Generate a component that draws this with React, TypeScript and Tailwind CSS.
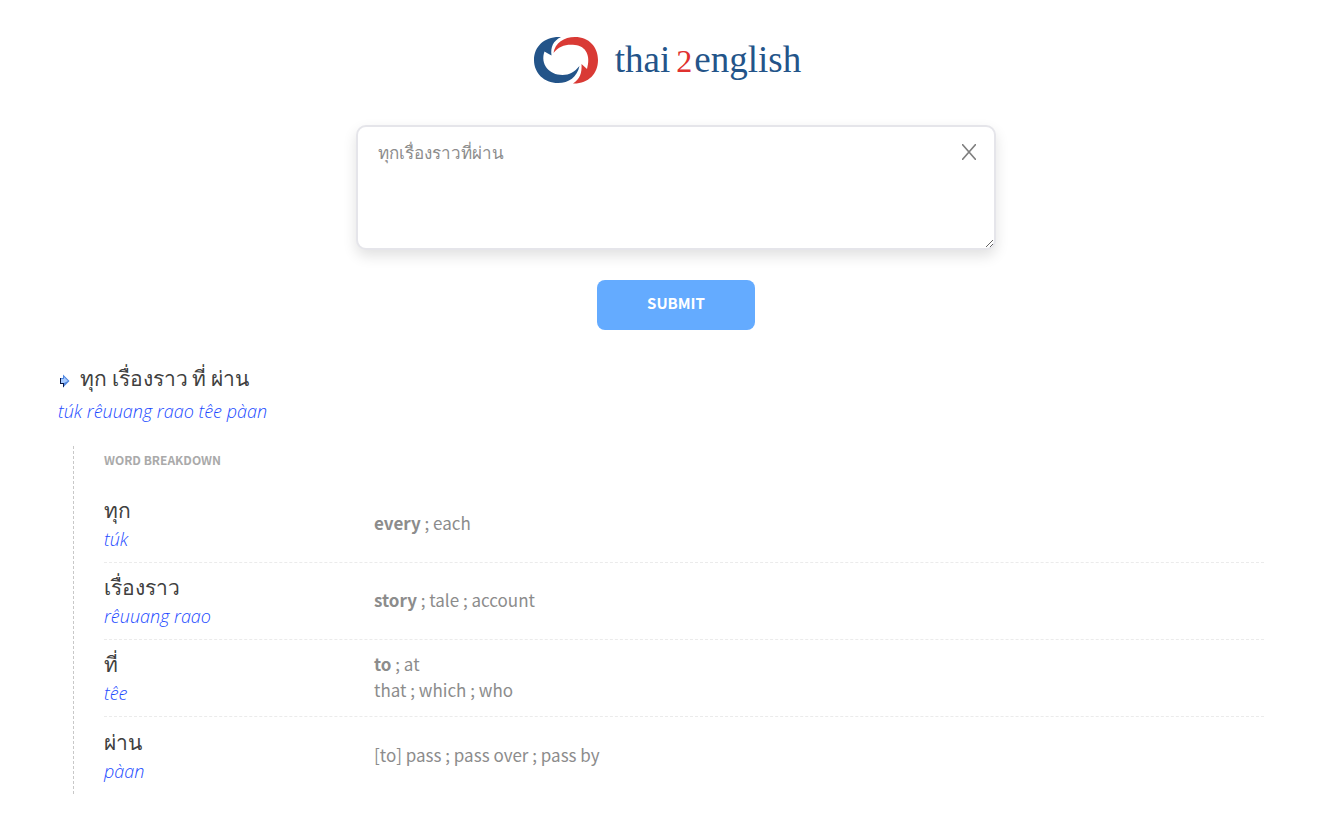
import { useState } from "react";

type Entry = {
  thai: string;
  roman: string;
  meanings: { main?: string; rest: string }[];
};

const entries: Entry[] = [
  { thai: "ทุก", roman: "túk", meanings: [{ main: "every", rest: " ; each" }] },
  { thai: "เรื่องราว", roman: "rêuuang raao", meanings: [{ main: "story", rest: " ; tale ; account" }] },
  { thai: "ที่", roman: "têe", meanings: [{ main: "to", rest: " ; at" }, { rest: "that ; which ; who" }] },
  { thai: "ผ่าน", roman: "pàan", meanings: [{ rest: "[to] pass ; pass over ; pass by" }] },
];

function Logo() {
  return (
    <a href="#" className="flex items-center gap-4">
      <svg width="66" height="48" viewBox="0 0 66 48" aria-hidden="true">
        <path
          fill="#235489"
          d="M28 1C12 0 1 10 1 24c0 13 10 23 24 23 11 0 19-6 21.5-17-5 6-10 9-17 9C16 39 7 28 11.5 15.5L14 17l4.5 2.5C17.5 11 20 5 28 1Z"
        />
        <path
          fill="#d93a35"
          d="M20.5 17C22 7 31 1 42 1c14 0 23 10 23 23 0 14-10 24-25 23.5C47 43 49 37 48.5 28l5.5 5C58 20 53 10 42 9c-9-1-16 1-21.5 8Z"
        />
      </svg>
      <span className="flex items-baseline font-['Liberation_Serif',serif] text-[37px] leading-[44px] text-[#235489]">
        <span>thai</span>
        <span className="mr-0.5 ml-1.5 text-[32px] text-[#e0312f]">2</span>
        <span>english</span>
      </span>
    </a>
  );
}

function Arrow() {
  return (
    <svg className="mt-2" width="12" height="14" viewBox="0 0 12 14" aria-hidden="true">
      <path d="M2 4h3V0.5L11.500 7 5 13.500V10H2z" fill="#4f86e0" />
      <path d="M3 5h3V3l4 4-4 2H3z" fill="#a9ccff" />
      <path d="M2 4v6h3v3.500l1-1V9H3V4z" fill="#0c1a4a" />
    </svg>
  );
}

export default function App() {
  const [text, setText] = useState("ทุกเรื่องราวที่ผ่าน");

  return (
    <div className="bg-white pb-7 font-['Noto_Sans_CJK_SC','Noto_Sans',sans-serif] text-[#8c8c8c]">
      <header className="flex justify-center pt-9 pl-1">
        <Logo />
      </header>

      <form className="flex flex-col items-center pt-[41px] pl-[22px]" onSubmit={(e) => e.preventDefault()}>
        <div className="relative w-full max-w-[640px]">
          <textarea
            aria-label="Thai text"
            value={text}
            onChange={(e) => setText(e.target.value)}
            className="block h-[125px] w-full resize rounded-[10px] border-2 border-[#e5e5ea] bg-white py-[11px] pr-12 pl-5 text-[17px] leading-[28px] shadow-[0_6px_14px_rgba(0,0,0,0.12)] outline-none"
          />
          <button type="button" aria-label="Clear" onClick={() => setText("")} className="absolute top-[19px] right-5">
            <svg width="14" height="16" viewBox="0 0 14 16" aria-hidden="true">
              <path d="M0 0l14 16M14 0l-14 16" stroke="#808080" strokeWidth="1.6" />
            </svg>
          </button>
        </div>
        <button
          type="submit"
          className="mt-[30px] h-[50px] w-[158px] rounded-lg bg-[#64abff] pb-1 text-[15px] leading-5 font-bold text-white"
        >
          SUBMIT
        </button>
      </form>

      <main className="pt-[31px] pr-[66px] pl-[58px]">
        <h1 className="flex items-center gap-[10px] text-[21px] leading-8 text-[#404040]">
          <Arrow />
          ทุก เรื่องราว ที่ ผ่าน
        </h1>
        <p className="font-['Open_Sans',sans-serif] text-[18px] leading-9 font-light text-[#1c4aff] italic">
          túk rêuuang raao têe pàan
        </p>

        <section className="mt-[17px] ml-[15px] border-l border-dashed border-[#c8c8c8] pl-[30px]">
          <h2 className="pb-3 text-[12px] leading-7 font-bold text-[#aaa]">WORD BREAKDOWN</h2>
          <dl>
            {entries.map((entry) => (
              <div
                key={entry.thai}
                className="flex h-[77px] items-center border-b border-dashed border-[#ebebeb] pb-0.5 last:border-b-0"
              >
                <dt className="w-[270px]">
                  <span className="block text-[21px] leading-8 text-[#404040]">{entry.thai}</span>
                  <span className="block font-['Open_Sans',sans-serif] text-[18px] leading-7 font-light text-[#1c4aff] italic">
                    {entry.roman}
                  </span>
                </dt>
                <dd className="text-[17px] leading-[26px]">
                  {entry.meanings.map((m) => (
                    <p key={m.rest}>
                      {m.main && <b>{m.main}</b>}
                      {m.rest}
                    </p>
                  ))}
                </dd>
              </div>
            ))}
          </dl>
        </section>
      </main>
    </div>
  );
}
